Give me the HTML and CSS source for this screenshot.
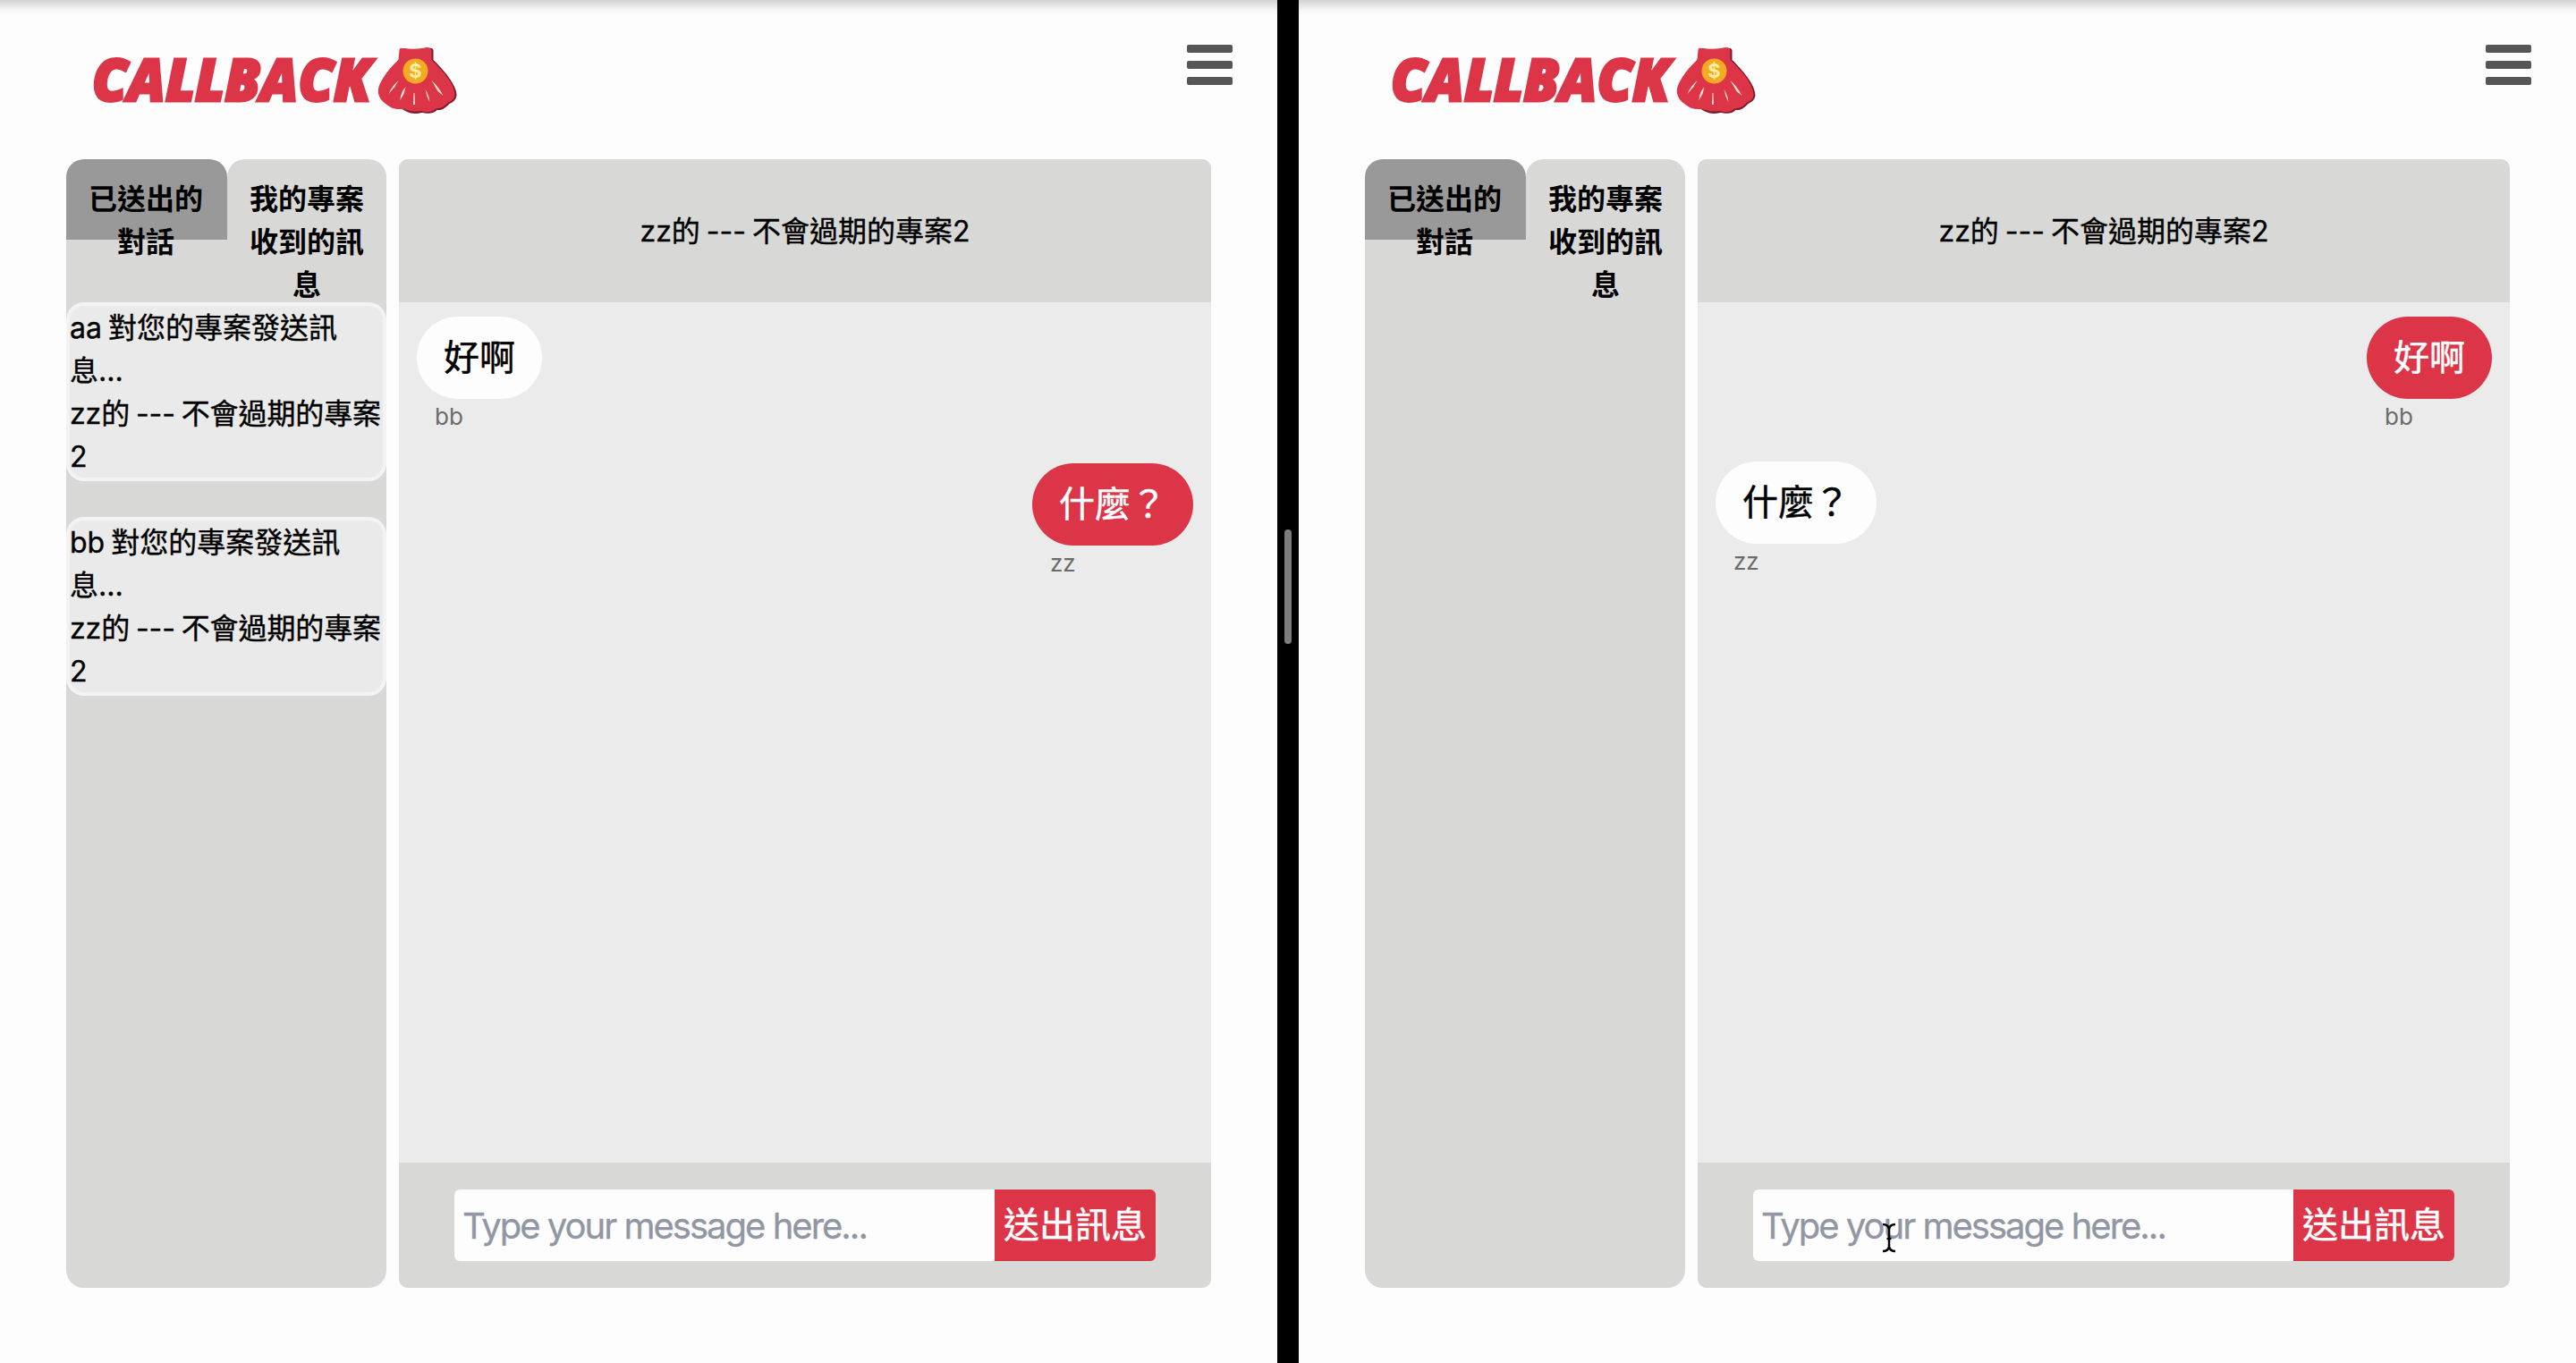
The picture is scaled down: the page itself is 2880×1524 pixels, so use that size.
FILE: index.html
```html
<!DOCTYPE html>
<html lang="zh-Hant">
<head>
<meta charset="utf-8">
<title>CALLBACK</title>
<link rel="stylesheet" href="styles.css">
</head>
<body>
<div class="screen">
  <main class="pane">
    <header class="topbar">
      <svg class="logo" viewBox="0 0 420 90">
        <text class="wordmark" x="3" y="71" textLength="312" lengthAdjust="spacingAndGlyphs">CALLBACK</text>
        <g transform="translate(316.500 5)">
          <path fill="#7d1a2c" d="M32 10Q31 7 35 7Q48 10 63 7Q67 6 68 9V20C79 31 94 47 94 60Q93 66 86 69C78 77 76 76 72 76C67 82 58 79 55 79C43 82 37 77 33 75C20 75 17 68 13 66C5 59 6 49 13 40Q20 30 29 20Z"/>
          <path fill="#dc3548" d="M30 9Q30 6 34 7Q48 9 61 6Q66 6 66 10V20C77 31 92 46 92 59Q92 65 84 68C77 76 73 73 70 75C65 80 58 78 54 77C43 79 38 75 33 75C20 76 17 70 12 67C3 58 6 49 12 40Q18 30 29 20Z"/>
          <circle cx="48" cy="32.500" r="14" fill="#f4aa22"/>
          <text class="coin" x="48" y="40">$</text>
          <path fill="#fbdcd2" d="M29 43L25 50L18 58Q21 50 29 43ZM37 50L35 58L31 65Q31 57 37 50ZM46 57L47 57L47.500 70L45.500 70ZM59 53Q63 59 64 67L61 61ZM66 43Q74 50 79 60L73 55Z"/>
        </g>
      </svg>
      <button class="menu" aria-label="menu"><i></i><i></i><i></i></button>
    </header>
    <div class="workspace">
      <aside class="sidebar">
        <nav class="tabs">
          <a class="tab active">已送出的對話</a>
          <a class="tab">我的專案收到的訊息</a>
        </nav>
        <ul class="threads">
          <li class="thread"><p>aa 對您的專案發送訊息...</p><p class="project">zz的 --- 不會過期的專案2</p></li>
          <li class="thread"><p>bb 對您的專案發送訊息...</p><p class="project">zz的 --- 不會過期的專案2</p></li>
        </ul>
      </aside>
      <section class="chat">
        <h1 class="chat-title">zz的 --- 不會過期的專案2</h1>
        <div class="messages">
          <div class="message"><p class="bubble">好啊</p><span class="author">bb</span></div>
          <div class="message own"><p class="bubble">什麼？</p><span class="author">zz</span></div>
        </div>
        <form class="composer">
          <input class="field" placeholder="Type your message here..."><button class="send" type="button">送出訊息</button>
        </form>
      </section>
    </div>
  </main>
  <div class="divider"><span class="grip"></span></div>
  <main class="pane">
    <header class="topbar">
      <svg class="logo" viewBox="0 0 420 90">
        <text class="wordmark" x="3" y="71" textLength="312" lengthAdjust="spacingAndGlyphs">CALLBACK</text>
        <g transform="translate(316.500 5)">
          <path fill="#7d1a2c" d="M32 10Q31 7 35 7Q48 10 63 7Q67 6 68 9V20C79 31 94 47 94 60Q93 66 86 69C78 77 76 76 72 76C67 82 58 79 55 79C43 82 37 77 33 75C20 75 17 68 13 66C5 59 6 49 13 40Q20 30 29 20Z"/>
          <path fill="#dc3548" d="M30 9Q30 6 34 7Q48 9 61 6Q66 6 66 10V20C77 31 92 46 92 59Q92 65 84 68C77 76 73 73 70 75C65 80 58 78 54 77C43 79 38 75 33 75C20 76 17 70 12 67C3 58 6 49 12 40Q18 30 29 20Z"/>
          <circle cx="48" cy="32.500" r="14" fill="#f4aa22"/>
          <text class="coin" x="48" y="40">$</text>
          <path fill="#fbdcd2" d="M29 43L25 50L18 58Q21 50 29 43ZM37 50L35 58L31 65Q31 57 37 50ZM46 57L47 57L47.500 70L45.500 70ZM59 53Q63 59 64 67L61 61ZM66 43Q74 50 79 60L73 55Z"/>
        </g>
      </svg>
      <button class="menu" aria-label="menu"><i></i><i></i><i></i></button>
    </header>
    <div class="workspace">
      <aside class="sidebar">
        <nav class="tabs">
          <a class="tab active">已送出的對話</a>
          <a class="tab">我的專案收到的訊息</a>
        </nav>
      </aside>
      <section class="chat">
        <h1 class="chat-title">zz的 --- 不會過期的專案2</h1>
        <div class="messages compact">
          <div class="message own"><p class="bubble">好啊</p><span class="author">bb</span></div>
          <div class="message"><p class="bubble">什麼？</p><span class="author">zz</span></div>
        </div>
        <form class="composer">
          <input class="field" placeholder="Type your message here..."><button class="send" type="button">送出訊息</button>
        </form>
      </section>
    </div>
    <svg class="cursor" viewBox="0 0 16 34"><path d="M1 2Q7 2 8 7Q9 2 15 2M8 7V27M1 32Q7 32 8 27Q9 32 15 32M5.500 18H10.500"/></svg>
  </main>
</div>
</body>
</html>
```
FILE: styles.css
```css
* { box-sizing: border-box; margin: 0; padding: 0; }
body {
  background: #fdfdfe;
  color: #000;
  font: 32px/48px Inter, "Noto Sans CJK TC", sans-serif;
  word-spacing: -2px;
}
.screen { display: flex; height: 1524px; }
.pane {
  position: relative;
  flex: 1;
  background: linear-gradient(#d2d2d2, #e6e6e6 6px, #f8f8f8 12px, #fdfdfe 18px);
}
.divider { width: 24px; background: #000; padding: 592px 8px 0; }
.grip { display: block; width: 8px; height: 128px; border-radius: 4px; background: #7c7c7c; }

.topbar {
  height: 178px;
  padding: 42px 50px 0 100px;
  display: flex;
  justify-content: space-between;
}
.logo { width: 420px; height: 90px; }
.wordmark { font: italic 800 65px "Open Sans", sans-serif; fill: #dc3548; stroke: #dc3548; stroke-width: 3px; }
.coin { font: 700 22px Inter, sans-serif; fill: #fff0a0; text-anchor: middle; }
.menu {
  width: 51px;
  margin-top: 8px;
  border: 0;
  background: none;
  display: flex;
  flex-direction: column;
  gap: 9.500px;
}
.menu i { width: 51px; height: 8.500px; border-radius: 2px; background: #565656; }

.workspace { display: flex; gap: 14px; height: 1262px; padding: 0 74px; }
.sidebar { width: 358px; border-radius: 20px; background: #d8d8d7; }
.tabs { display: flex; height: 160px; background: linear-gradient(#fdfdfe 20px, transparent 20px); }
.tab {
  width: 180px;
  height: 90px;
  padding: 21px 21px 0 19px;
  border-radius: 20px 20px 0 0;
  background: #d8d8d7;
  font-weight: 600;
  text-align: center;
}
.tab + .tab { width: 178px; padding: 21px 24px 0; }
.tab.active { background: #999; }
.threads { list-style: none; display: flex; flex-direction: column; gap: 40px; }
.thread {
  height: 200px;
  padding-top: 1px;
  border: 4px solid #f3f3f3;
  border-radius: 20px;
  background: #eaeaea;
  -webkit-text-stroke: 0.4px;
}
.project { line-break: anywhere; letter-spacing: -0.100px; }

.chat { width: 908px; border-radius: 10px; overflow: hidden; background: #ebebeb; display: flex; flex-direction: column; }
.chat-title {
  height: 160px;
  padding-top: 1px;
  background: #d8d8d7;
  font: inherit;
  line-height: 160px;
  text-align: center;
  -webkit-text-stroke: 0.4px;
}
.messages { flex: 1; padding: 16px 20px; display: flex; flex-direction: column; gap: 32px; }
.messages.compact { gap: 30px; }
.message { width: max-content; }
.message.own { align-self: flex-end; }
.bubble {
  height: 92px;
  padding: 0 30px;
  border-radius: 46px;
  background: #fdfdfe;
  font-size: 40px;
  line-height: 92px;
  -webkit-text-stroke: 0.5px;
}
.own .bubble { background: #dc3548; color: #fff; }
.author { display: block; height: 40px; padding-left: 20px; color: #6b6b6b; font-size: 26px; line-height: 39px; }
.composer { height: 140px; padding: 30px 62px; background: #d8d8d7; display: flex; }
.field {
  width: 604px;
  height: 80px;
  padding: 0 9px;
  border: 0;
  border-radius: 6px 0 0 6px;
  background: #fdfdfe;
  font: inherit;
  font-size: 40px;
  letter-spacing: -2px;
  word-spacing: 0;
}
.field::placeholder { color: #9097a3; opacity: 1; -webkit-text-stroke: 0.3px; }
.send {
  width: 180px;
  border: 0;
  border-radius: 0 6px 6px 0;
  background: #dc3548;
  color: #fff;
  font: inherit;
  font-size: 40px;
  white-space: nowrap;
  -webkit-text-stroke: 0.5px;
}
.cursor { position: absolute; left: 652px; top: 1367px; width: 16px; height: 34px; fill: none; stroke: #000; stroke-width: 2.5px; }
```
